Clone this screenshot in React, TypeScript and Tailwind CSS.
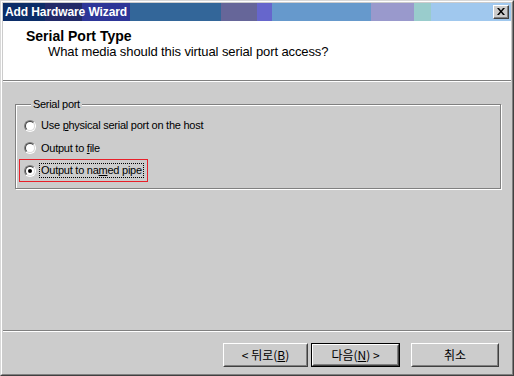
import React from "react";

const latin = "font-['Liberation_Sans',Arial,sans-serif]";
const korean = "font-['Noto_Sans_CJK_KR','Liberation_Sans',sans-serif]";

function Radio({ checked }: { checked?: boolean }) {
  return (
    <div className="w-[12px] h-[12px] shrink-0 rounded-full border border-t-[#808080] border-l-[#808080] border-r-white border-b-white">
      <div className="w-full h-full rounded-full border border-t-[#404040] border-l-[#404040] border-r-[#dcdcdc] border-b-[#dcdcdc] bg-white flex items-center justify-center">
        {checked && <div className="w-[4px] h-[4px] rounded-full bg-black" />}
      </div>
    </div>
  );
}

function Btn({
  children,
  width,
  isDefault,
}: {
  children: React.ReactNode;
  width: string;
  isDefault?: boolean;
}) {
  const face = (
    <div className="h-full border border-t-white border-l-white border-r-[#404040] border-b-[#404040]">
      <div className="h-full border border-t-[#cccccc] border-l-[#cccccc] border-r-[#808080] border-b-[#808080] flex items-center justify-center text-[12px] text-black">
        {children}
      </div>
    </div>
  );
  return (
    <div className={`${width} h-[24px] ${korean}`}>
      {isDefault ? <div className="h-full border border-black">{face}</div> : face}
    </div>
  );
}

export default function App() {
  return (
    <div className="w-[514px] h-[376px] bg-[#cccccc] border border-t-[#d8d8d8] border-l-[#d8d8d8] border-r-[#404040] border-b-[#404040]">
      <div className="h-full border border-t-white border-l-white border-r-[#808080] border-b-[#808080] p-px flex flex-col">
        {/* title bar */}
        <div className="h-[18px] flex items-center justify-between pl-[2px] pr-[2px] bg-[linear-gradient(to_right,#0b2d68_0_42px,#222a68_42px_79px,#2d3698_79px_127px,#336699_127px_218px,#666699_218px_254px,#6666cc_254px_269px,#6699cc_269px_368px,#9999cc_368px_411px,#99cccc_411px_428px,#a0c8ee_428px)]">
          <span className={`${latin} text-[12px] font-bold text-white tracking-[-0.1px] leading-none`}>
            Add Hardware Wizard
          </span>
          <div className="w-[16px] h-[14px] border border-t-white border-l-white border-r-[#404040] border-b-[#404040] bg-[#cccccc]">
            <div className="h-full border-r border-b border-[#808080] flex items-center justify-center">
              <svg width="8" height="7" viewBox="0 0 8 7">
                <path d="M0 0h2l2 2.5L6 0h2L5 3.5 8 7H6L4 4.5 2 7H0l3-3.5z" fill="#000" />
              </svg>
            </div>
          </div>
        </div>

        {/* header */}
        <div className={`h-[59px] bg-white ${latin} text-black`}>
          <div className="pl-[23px] pt-[7px] text-[14px] font-bold leading-[16px]">Serial Port Type</div>
          <div className="pl-[45px] text-[13px] leading-[15px] tracking-[-0.1px]">
            What media should this virtual serial port access?
          </div>
        </div>
        <div className="h-px bg-[#808080]" />
        <div className="h-px bg-white" />

        {/* body */}
        <div className={`h-[248px] pt-[16px] pl-[12px] ${latin} text-black`}>
          <fieldset className="w-[486px] h-[91px] border border-[#808080] shadow-[inset_1px_1px_0_#fff,1px_1px_0_#fff] pl-[8px]">
            <legend className="ml-[7px] px-[2px] text-[11px] tracking-[-0.3px] leading-[13px] bg-[#cccccc]">
              Serial port
            </legend>
            <div className="flex flex-col pt-[3px] text-[11px] tracking-[-0.25px]">
              <div className="h-[23px] flex items-center gap-[5px]">
                <Radio />
                <span>
                  Use <u>p</u>hysical serial port on the host
                </span>
              </div>
              <div className="h-[22px] flex items-center gap-[5px]">
                <Radio />
                <span>
                  Output to <u>f</u>ile
                </span>
              </div>
              <div className="-ml-[5px] w-[129px] h-[23px] border border-[#e8202a] flex items-center gap-[3px] pl-[4px]">
                <Radio checked />
                <span className="border border-dotted border-black px-px leading-[13px]">
                  Output to na<u>m</u>ed pipe
                </span>
              </div>
            </div>
          </fieldset>
        </div>
        <div className="h-px bg-[#808080]" />
        <div className="h-px bg-white" />

        {/* footer */}
        <div className="flex-1 pt-[11px] pr-[12px] flex justify-end">
          <Btn width="w-[85px]">
            &lt; 뒤로(<u>B</u>)
          </Btn>
          <div className="w-[3px]" />
          <Btn width="w-[89px]" isDefault>
            다음(<u>N</u>) &gt;
          </Btn>
          <div className="w-[11px]" />
          <Btn width="w-[88px]">취소</Btn>
        </div>
      </div>
    </div>
  );
}
